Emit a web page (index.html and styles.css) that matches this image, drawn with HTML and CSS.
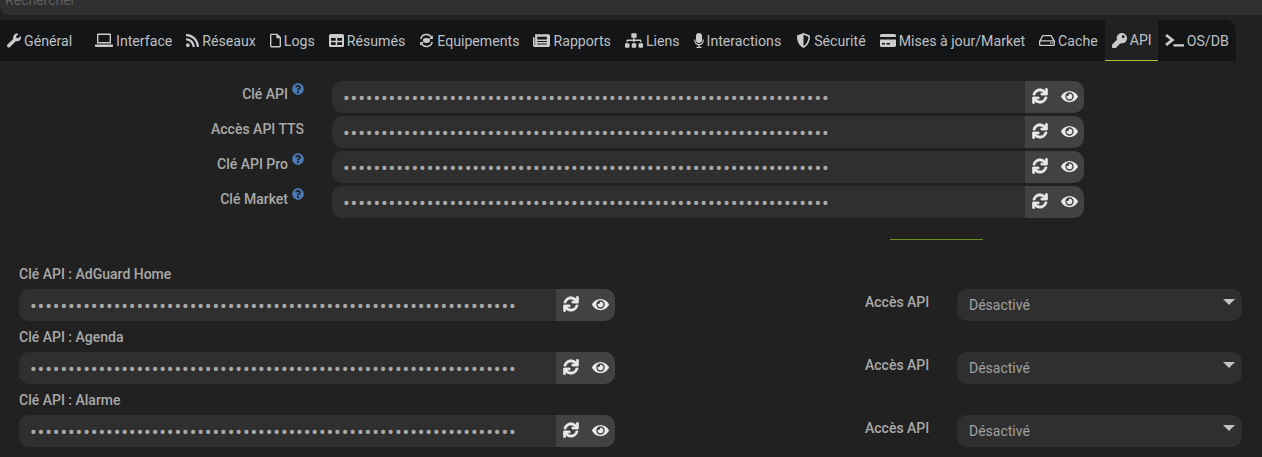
FILE: index.html
```html
<!DOCTYPE html>
<html lang="fr">

<head>
  <meta charset="UTF-8">
  <meta name="viewport" content="width=device-width, initial-scale=1.0">
  <title>Configuration - API</title>
  <link rel="stylesheet" href="styles.css">
</head>

<body>
  <svg class="sprite" xmlns="http://www.w3.org/2000/svg">
    <symbol id="i-wrench" viewBox="0 0 512 512"><path d="M507.73 109.1c-2.24-9.03-13.54-12.09-20.12-5.51l-74.36 74.36-67.88-11.31-11.31-67.88 74.36-74.36c6.62-6.62 3.43-17.9-5.66-20.16-47.38-11.74-99.55.91-136.58 37.93-39.64 39.64-50.55 97.1-34.05 147.2L18.74 402.76c-24.99 24.99-24.99 65.51 0 90.5 24.99 24.99 65.51 24.99 90.5 0l213.21-213.21c50.12 16.71 107.47 5.68 147.37-34.22 37.07-37.07 49.7-89.32 37.91-136.73z"/></symbol>
    <symbol id="i-laptop" viewBox="0 0 18 14"><path fill-rule="evenodd" d="M3 0h12a1 1 0 0 1 1 1v9H2V1a1 1 0 0 1 1-1zm.4 1.4v7.2h11.2V1.4zM0 11h18v1.4a1.2 1.2 0 0 1-1.2 1.2H1.2A1.2 1.2 0 0 1 0 12.4z"/></symbol>
    <symbol id="i-rss" viewBox="0 0 448 512"><path d="M128.081 415.959c0 35.369-28.672 64.041-64.041 64.041S0 451.328 0 415.959s28.672-64.041 64.041-64.041 64.04 28.673 64.04 64.041zm175.66 47.25c-8.354-154.6-132.185-278.587-286.95-286.95C7.656 175.765 0 183.105 0 192.253v48.069c0 8.415 6.49 15.472 14.887 16.018 111.832 7.284 201.473 96.702 208.772 208.772.547 8.397 7.604 14.887 16.018 14.887h48.069c9.149.001 16.489-7.655 15.995-16.79zm144.249.288C439.596 229.677 251.465 40.445 16.503 32.01 7.473 31.686 0 38.981 0 48.016v48.068c0 8.625 6.835 15.645 15.453 15.999 191.179 7.839 344.627 161.316 352.465 352.465.353 8.618 7.373 15.453 15.999 15.453h48.068c9.034-.001 16.329-7.474 16.005-16.504z"/></symbol>
    <symbol id="i-file" viewBox="0 0 12 15"><path fill-rule="evenodd" d="M1.5 0H8l4 4v9.5a1.5 1.5 0 0 1-1.5 1.5h-9A1.5 1.5 0 0 1 0 13.5v-12A1.5 1.5 0 0 1 1.5 0zm0 1.4v12.2h9V5H7V1.4z"/></symbol>
    <symbol id="i-table" viewBox="0 0 15 13"><path fill-rule="evenodd" d="M1.5 0h12A1.5 1.5 0 0 1 15 1.5v10a1.5 1.5 0 0 1-1.5 1.5h-12A1.5 1.5 0 0 1 0 11.500v-10A1.500 1.500 0 0 1 1.500 0zM2 4v2.700h4.700V4zm6.300 0v2.700H13V4zM2 8.200V11h4.700V8.200zm6.300 0V11H13V8.200z"/></symbol>
    <symbol id="i-equip" viewBox="0 0 16 14"><path fill="none" stroke="currentColor" stroke-width="1.600" d="M2 5.500A6 5.500 0 0 1 13.500 4M14 8.500A6 5.500 0 0 1 2.500 10"/><path d="M14.800 1.500v4h-4zM1.200 12.500v-4h4z"/><ellipse cx="8" cy="7" rx="3.800" ry="2.600"/></symbol>
    <symbol id="i-report" viewBox="0 0 16 12"><path fill-rule="evenodd" d="M2 0h12.500A1.500 1.500 0 0 1 16 1.500v9a1.500 1.500 0 0 1-1.500 1.500h-13A1.500 1.500 0 0 1 0 10.500V3h1.500v7.500h.5zM4 2.500V5h9V2.500zM4 6.500v1h9v-1zM4 8.800v1h9v-1z"/></symbol>
    <symbol id="i-sitemap" viewBox="0 0 640 512"><path d="M128 352H32c-17.670 0-32 14.330-32 32v96c0 17.670 14.330 32 32 32h96c17.670 0 32-14.330 32-32v-96c0-17.670-14.330-32-32-32zm-24-80h192v48h48v-48h192v48h48v-57.590c0-21.170-17.230-38.410-38.410-38.410H344v-64h40c17.670 0 32-14.330 32-32V32c0-17.670-14.330-32-32-32H256c-17.670 0-32 14.330-32 32v96c0 17.670 14.330 32 32 32h40v64H94.410C73.230 224 56 241.230 56 262.410V320h48v-48zm264 80h-96c-17.670 0-32 14.330-32 32v96c0 17.670 14.330 32 32 32h96c17.670 0 32-14.330 32-32v-96c0-17.670-14.330-32-32-32zm240 0h-96c-17.670 0-32 14.330-32 32v96c0 17.670 14.330 32 32 32h96c17.670 0 32-14.330 32-32v-96c0-17.670-14.330-32-32-32z"/></symbol>
    <symbol id="i-mic" viewBox="0 0 10 15"><rect x="2" y="0" width="6" height="10" rx="3"/><path fill="none" stroke="currentColor" stroke-width="1.200" d="M.8 6.500v1a4.200 4.200 0 0 0 8.400 0v-1M5 11.800v2.400M2.500 14.300h5"/></symbol>
    <symbol id="i-shield" viewBox="0 0 13 15"><path fill-rule="evenodd" d="M6.500 0 13 2.500c0 6-1.800 10-6.500 12.500C1.800 12.500 0 8.500 0 2.500zm0 1.800v11.300c3.200-2 4.700-5 4.900-9.400z"/></symbol>
    <symbol id="i-card" viewBox="0 0 16 13"><path fill-rule="evenodd" d="M1.500 0h13A1.500 1.500 0 0 1 16 1.500V3H0V1.500A1.500 1.500 0 0 1 1.500 0zM0 5.500h16v6a1.500 1.500 0 0 1-1.500 1.500h-13A1.500 1.500 0 0 1 0 11.500zM2 9v1.500h3V9zm4.500 0v1.500H10V9z"/></symbol>
    <symbol id="i-hdd" viewBox="0 0 16 11"><path fill-rule="evenodd" d="M3.500 0h9L16 6v3.500A1.500 1.500 0 0 1 14.500 11h-13A1.500 1.500 0 0 1 0 9.500V6zm.8 1.300L2 5.300h12l-2.300-4zM1.300 6.600v3.100h13.400V6.600zM11 7.300h1.300v1.400H11zm2 0h1v1.400h-1z"/></symbol>
    <symbol id="i-key" viewBox="0 0 512 512"><path d="M512 176.001C512 273.203 433.202 352 336 352c-11.220 0-22.190-1.062-32.827-3.069l-24.012 27.014A23.999 23.999 0 0 1 261.223 384H224v40c0 13.255-10.745 24-24 24h-40v40c0 13.255-10.745 24-24 24H24c-13.255 0-24-10.745-24-24v-78.059c0-6.365 2.529-12.470 7.029-16.971l161.802-161.802C163.108 213.814 160 195.271 160 176 160 78.798 238.797.001 335.999 0 433.488-.001 512 78.511 512 176.001zM336 128c0 26.510 21.490 48 48 48s48-21.490 48-48-21.490-48-48-48-48 21.490-48 48z"/></symbol>
    <symbol id="i-term" viewBox="0 0 18 12"><path fill="none" stroke="currentColor" stroke-width="2.600" d="M1 .8l6 4.700-6 4.700"/><rect x="8" y="9.500" width="10" height="2.200"/></symbol>
    <symbol id="i-sync" viewBox="-20 -20 552 552"><path stroke="#eaeaea" stroke-width="26" d="M440.650 12.570l4 82.770A247.160 247.160 0 0 0 255.830 8C134.730 8 33.910 94.920 12.290 209.820A12 12 0 0 0 24.090 224h49.050a12 12 0 0 0 11.670-9.260 175.910 175.910 0 0 1 317-56.940l-101.460-4.860a12 12 0 0 0-12.570 12v47.410a12 12 0 0 0 12 12H500a12 12 0 0 0 12-12V12a12 12 0 0 0-12-12h-47.370a12 12 0 0 0-11.980 12.570zM255.830 432a175.610 175.610 0 0 1-146-77.800l101.800 4.870a12 12 0 0 0 12.570-12v-47.400a12 12 0 0 0-12-12H12a12 12 0 0 0-12 12V500a12 12 0 0 0 12 12h47.350a12 12 0 0 0 12-12.600l-4.150-82.570A247.170 247.170 0 0 0 255.830 504c121.110 0 221.930-86.920 243.550-201.820a12 12 0 0 0-11.800-14.180h-49.050a12 12 0 0 0-11.670 9.260A175.860 175.860 0 0 1 255.830 432z"/></symbol>
    <symbol id="i-eye" viewBox="0 0 576 512"><path d="M572.520 241.400C518.290 135.590 410.930 64 288 64S57.680 135.640 3.480 241.410a32.350 32.350 0 0 0 0 29.190C57.710 376.410 165.070 448 288 448s230.320-71.640 284.520-177.410a32.350 32.350 0 0 0 0-29.190zM288 400a144 144 0 1 1 144-144 143.930 143.930 0 0 1-144 144zm0-240a95.310 95.310 0 0 0-25.310 3.790 47.850 47.850 0 0 1-66.900 66.900A95.780 95.780 0 1 0 288 160z"/></symbol>
    <symbol id="i-help" viewBox="0 0 512 512"><path d="M504 256c0 136.997-111.043 248-248 248S8 392.997 8 256C8 119.083 119.043 8 256 8s248 111.083 248 248zM262.655 90c-54.497 0-89.255 22.957-116.549 63.758-3.536 5.286-2.353 12.415 2.715 16.258l34.699 26.310c5.205 3.947 12.621 3.008 16.665-2.122 17.864-22.658 30.113-35.797 57.303-35.797 20.429 0 45.698 13.148 45.698 32.958 0 14.976-12.363 22.667-32.534 33.976C247.128 238.528 216 254.941 216 296v4c0 6.627 5.373 12 12 12h56c6.627 0 12-5.373 12-12v-1.333c0-28.462 83.186-29.647 83.186-106.667 0-58.002-60.165-102-116.531-102zM256 338c-25.365 0-46 20.635-46 46 0 25.364 20.635 46 46 46s46-20.636 46-46c0-25.365-20.635-46-46-46z"/></symbol>
  </svg>

  <div class="search">Rechercher</div>

  <ul class="tabs">
    <li class="tab tab-general"><svg class="ico w14"><use href="#i-wrench"/></svg>Général</li>
    <li class="tab"><svg class="ico w18"><use href="#i-laptop"/></svg>Interface</li>
    <li class="tab"><svg class="ico w13"><use href="#i-rss"/></svg>Réseaux</li>
    <li class="tab"><svg class="ico w11"><use href="#i-file"/></svg>Logs</li>
    <li class="tab"><svg class="ico w15"><use href="#i-table"/></svg>Résumés</li>
    <li class="tab"><svg class="ico w15"><use href="#i-equip"/></svg>Equipements</li>
    <li class="tab"><svg class="ico w17"><use href="#i-report"/></svg>Rapports</li>
    <li class="tab"><svg class="ico w18"><use href="#i-sitemap"/></svg>Liens</li>
    <li class="tab tab-wide"><svg class="ico w10"><use href="#i-mic"/></svg>Interactions</li>
    <li class="tab"><svg class="ico w15"><use href="#i-shield"/></svg>Sécurité</li>
    <li class="tab"><svg class="ico w16"><use href="#i-card"/></svg>Mises à jour/Market</li>
    <li class="tab"><svg class="ico w16"><use href="#i-hdd"/></svg>Cache</li>
    <li class="tab active"><svg class="ico w15"><use href="#i-key"/></svg>API</li>
    <li class="tab"><svg class="ico w19"><use href="#i-term"/></svg>OS/DB</li>
  </ul>

  <form class="keys">
    <div class="key-row">
      <label class="key-label">Clé API <svg class="help"><use href="#i-help"/></svg></label>
      <div class="input-group">
        <input class="field" type="password" value="aaaaaaaaaaaaaaaaaaaaaaaaaaaaaaaaaaaaaaaaaaaaaaaaaaaaaaaaaaaaaaaa">
        <span class="addon"><svg class="btn-ico"><use href="#i-sync"/></svg><svg class="btn-ico eye"><use href="#i-eye"/></svg></span>
      </div>
    </div>
    <div class="key-row">
      <label class="key-label">Accès API TTS</label>
      <div class="input-group">
        <input class="field" type="password" value="aaaaaaaaaaaaaaaaaaaaaaaaaaaaaaaaaaaaaaaaaaaaaaaaaaaaaaaaaaaaaaaa">
        <span class="addon"><svg class="btn-ico"><use href="#i-sync"/></svg><svg class="btn-ico eye"><use href="#i-eye"/></svg></span>
      </div>
    </div>
    <div class="key-row">
      <label class="key-label">Clé API Pro <svg class="help"><use href="#i-help"/></svg></label>
      <div class="input-group">
        <input class="field" type="password" value="aaaaaaaaaaaaaaaaaaaaaaaaaaaaaaaaaaaaaaaaaaaaaaaaaaaaaaaaaaaaaaaa">
        <span class="addon"><svg class="btn-ico"><use href="#i-sync"/></svg><svg class="btn-ico eye"><use href="#i-eye"/></svg></span>
      </div>
    </div>
    <div class="key-row">
      <label class="key-label">Clé Market <svg class="help"><use href="#i-help"/></svg></label>
      <div class="input-group">
        <input class="field" type="password" value="aaaaaaaaaaaaaaaaaaaaaaaaaaaaaaaaaaaaaaaaaaaaaaaaaaaaaaaaaaaaaaaa">
        <span class="addon"><svg class="btn-ico"><use href="#i-sync"/></svg><svg class="btn-ico eye"><use href="#i-eye"/></svg></span>
      </div>
    </div>
  </form>

  <div class="divider"></div>

  <section class="plugins">
    <div class="plugin">
      <div class="plugin-key">
        <label class="plugin-label">Clé API : AdGuard Home</label>
        <div class="input-group">
          <input class="field" type="password" value="aaaaaaaaaaaaaaaaaaaaaaaaaaaaaaaaaaaaaaaaaaaaaaaaaaaaaaaaaaaaaaaa">
          <span class="addon"><svg class="btn-ico"><use href="#i-sync"/></svg><svg class="btn-ico eye"><use href="#i-eye"/></svg></span>
        </div>
      </div>
      <label class="access-label">Accès API</label>
      <div class="select">Désactivé</div>
    </div>
    <div class="plugin">
      <div class="plugin-key">
        <label class="plugin-label">Clé API : Agenda</label>
        <div class="input-group">
          <input class="field" type="password" value="aaaaaaaaaaaaaaaaaaaaaaaaaaaaaaaaaaaaaaaaaaaaaaaaaaaaaaaaaaaaaaaa">
          <span class="addon"><svg class="btn-ico"><use href="#i-sync"/></svg><svg class="btn-ico eye"><use href="#i-eye"/></svg></span>
        </div>
      </div>
      <label class="access-label">Accès API</label>
      <div class="select">Désactivé</div>
    </div>
    <div class="plugin">
      <div class="plugin-key">
        <label class="plugin-label">Clé API : Alarme</label>
        <div class="input-group">
          <input class="field" type="password" value="aaaaaaaaaaaaaaaaaaaaaaaaaaaaaaaaaaaaaaaaaaaaaaaaaaaaaaaaaaaaaaaa">
          <span class="addon"><svg class="btn-ico"><use href="#i-sync"/></svg><svg class="btn-ico eye"><use href="#i-eye"/></svg></span>
        </div>
      </div>
      <label class="access-label">Accès API</label>
      <div class="select">Désactivé</div>
    </div>
  </section>
</body>

</html>
```

FILE: styles.css
```css
html {
  height: 100%;
  overflow: hidden;
}

body {
  margin: 0;
  height: 457px;
  overflow: hidden;
  background: #212121;
  color: #a9a9a9;
  font-family: Roboto, "Liberation Sans", sans-serif;
  font-size: 14px;
}

.sprite {
  display: none;
}

.search {
  height: 32px;
  margin-top: -17px;
  padding: 0 5px;
  line-height: 35px;
  background: #2f2f2f;
  border-radius: 0 0 0 8px;
  color: #5e5e5e;
}

/* tab bar */
.tabs {
  display: flex;
  width: 1236px;
  height: 41px;
  margin: 5px 0 0;
  padding: 0;
  list-style: none;
  background: #131517;
  border-radius: 0 10px 0 0;
}

.tab {
  display: flex;
  align-items: center;
  height: 41px;
  padding: 0 7px;
  color: #bdc0c3;
  font-size: 14.15px;
  white-space: nowrap;
}

.tab-general {
  padding-right: 16px;
}

.tab-wide {
  padding-right: 8px;
}

.tab.active {
  padding-right: 6px;
  background: #212121;
  border-bottom: 1px solid #a6c23a;
  box-sizing: border-box;
}

.ico {
  flex: none;
  height: 15px;
  margin-right: 3px;
  fill: #c9cbcd;
  color: #c9cbcd;
}

.w10 { width: 10px; }
.w11 { width: 11px; }
.w13 { width: 13px; }
.w14 { width: 14px; }
.w15 { width: 15px; }
.w16 { width: 16px; }
.w17 { width: 17px; }
.w18 { width: 18px; }
.w19 { width: 19px; }

/* main keys */
.keys {
  margin-top: 20px;
}

.key-row {
  display: flex;
  margin-bottom: 3px;
}

.key-label {
  display: flex;
  justify-content: flex-end;
  gap: 4px;
  width: 304px;
  margin-right: 28px;
  padding-top: 5px;
  box-sizing: border-box;
  font-weight: 500;
  line-height: 17px;
}

.help {
  width: 12px;
  height: 12px;
  margin-top: -3px;
  fill: #4a7ab5;
}

.input-group {
  display: flex;
  width: 752px;
  height: 32px;
}

.field {
  flex: 1;
  min-width: 0;
  height: 32px;
  padding: 1px 11px 0;
  box-sizing: border-box;
  border: none;
  outline: none;
  background: #2f2f2f;
  border-radius: 10px 0 0 10px;
  color: #a9a9a9;
  font-family: Roboto, "Liberation Sans", sans-serif;
  font-size: 20px;
  letter-spacing: 0.855px;
}

.addon {
  display: flex;
  flex: none;
  align-items: center;
  gap: 13px;
  width: 59px;
  padding: 0 0 2px 7px;
  box-sizing: border-box;
  background: #424242;
  border-radius: 0 10px 10px 0;
}

.btn-ico {
  width: 16px;
  height: 16px;
  fill: #eaeaea;
}

.btn-ico.eye {
  width: 17px;
  height: 15px;
}

.divider {
  width: 93px;
  height: 1px;
  margin: 21px 0 0 890px;
  background: #6a8f16;
}

/* plugin keys */
.plugins {
  margin-top: 18px;
  padding-left: 19px;
}

.plugin {
  display: flex;
  align-items: flex-end;
  height: 63px;
}

.plugin-key {
  width: 596px;
}

.plugin-label {
  display: block;
  height: 17px;
  margin-bottom: 6px;
  font-weight: 500;
  line-height: 17px;
}

.plugin .input-group {
  width: 596px;
}

.access-label {
  width: 64px;
  margin-left: 250px;
  padding-bottom: 10px;
  font-weight: 500;
  line-height: 17px;
  white-space: nowrap;
}

.select {
  position: relative;
  width: 285px;
  height: 32px;
  margin-left: 28px;
  padding: 0 12px;
  box-sizing: border-box;
  background: #2f2f2f;
  border-radius: 10px;
  line-height: 32px;
  color: #a0a0a0;
}

.select::after {
  content: "";
  position: absolute;
  top: 10px;
  right: 7px;
  border-left: 6px solid transparent;
  border-right: 6px solid transparent;
  border-top: 6px solid #c4c4c4;
}
```
